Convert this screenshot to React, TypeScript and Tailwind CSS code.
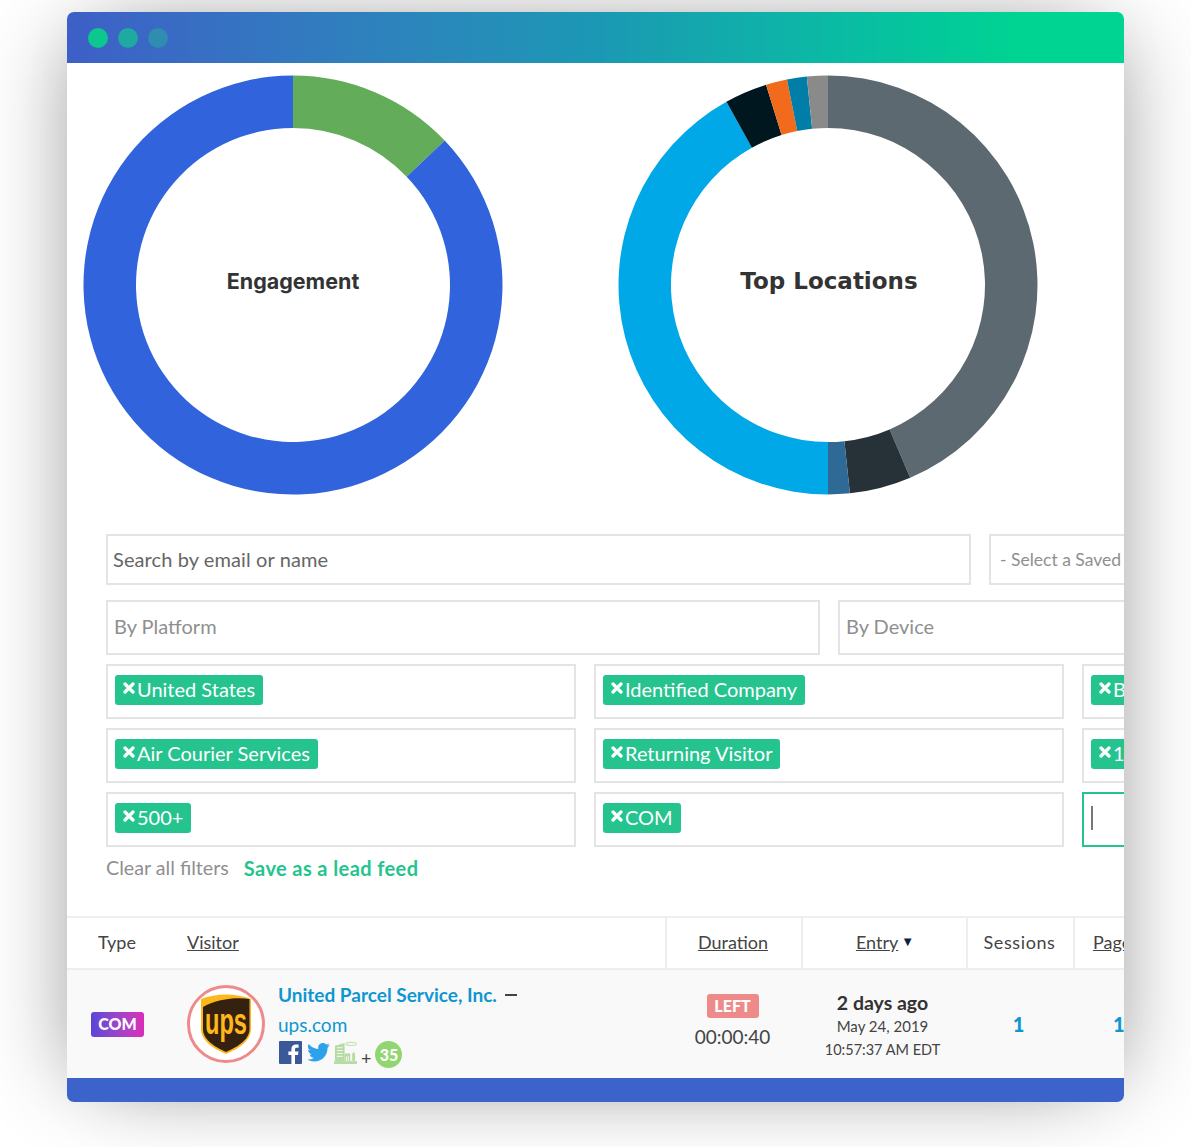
const SANS = "font-['Lato','Liberation_Sans',sans-serif]";

type Segment = { color: string; from: number; to: number };

const engagement: Segment[] = [
  { color: "#63ac59", from: 0, to: 46.4 },
  { color: "#3164dc", from: 46.4, to: 360 },
];

const locations: Segment[] = [
  { color: "#5c6970", from: 0, to: 156.9 },
  { color: "#263238", from: 156.9, to: 174 },
  { color: "#2f6a96", from: 174, to: 180 },
  { color: "#00a8e8", from: 180, to: 331 },
  { color: "#00171f", from: 331, to: 342.8 },
  { color: "#f26a1b", from: 342.8, to: 348.7 },
  { color: "#007ea7", from: 348.7, to: 354.2 },
  { color: "#8a8a8a", from: 354.2, to: 360 },
];

function arcPath(from: number, to: number) {
  const R = 209.5;
  const r = 157;
  const pt = (radius: number, deg: number) => {
    const a = (deg * Math.PI) / 180;
    return `${(210 + radius * Math.sin(a)).toFixed(2)} ${(210 - radius * Math.cos(a)).toFixed(2)}`;
  };
  const large = to - from > 180 ? 1 : 0;
  return `M${pt(R, from)} A${R} ${R} 0 ${large} 1 ${pt(R, to)} L${pt(r, to)} A${r} ${r} 0 ${large} 0 ${pt(r, from)} Z`;
}

function Donut({ segments, label, labelClass }: { segments: Segment[]; label: string; labelClass: string }) {
  return (
    <div className="relative h-[420px] w-[420px] shrink-0">
      <svg width="420" height="420" viewBox="0 0 420 420" className="block">
        {segments.map((s) => (
          <path key={s.color} d={arcPath(s.from, s.to)} fill={s.color} />
        ))}
      </svg>
      <div className={`absolute inset-0 flex items-center justify-center pb-2 font-bold text-[#333] ${labelClass}`}>
        {label}
      </div>
    </div>
  );
}

function Chip({ label }: { label: string }) {
  return (
    <span className="inline-flex h-[30px] shrink-0 items-center whitespace-nowrap rounded-[3px] bg-[#25c48e] pb-[2px] pl-2 pr-2 text-[20px] leading-none text-white">
      <svg width="12" height="12" viewBox="0 0 12 12" className="mr-[2px] -mt-[2px] shrink-0">
        <path d="M2 2 L10 10 M10 2 L2 10" stroke="#fff" strokeWidth="3.2" strokeLinecap="round" />
      </svg>
      {label}
    </span>
  );
}

function TagBox({ label, width, focused }: { label?: string; width: string; focused?: boolean }) {
  return (
    <div className={`flex h-[55px] shrink-0 items-center border-2 bg-white pb-[3px] pl-[7px] ${width} ${focused ? "border-[#25c48e]" : "border-[#e4e4e4]"}`}>
      {label && <Chip label={label} />}
      {focused && <span className="h-6 w-[2px] bg-[#777]" />}
    </div>
  );
}

function Window() {
  return (
    <div className={`ml-[67px] mt-3 h-[1090px] w-[1057px] overflow-hidden rounded-[7px] bg-white shadow-[-28px_0_80px_-25px_rgba(0,0,0,0.3),28px_0_80px_-25px_rgba(0,0,0,0.3)] ${SANS}`}>
      <div className="flex h-[51px] items-center gap-[10px] bg-linear-to-r from-[#3d5fc7] via-[#1b98b4] via-50% to-[#00d492] to-90% pl-[21px]">
        <span className="h-5 w-5 rounded-full bg-[#0cc88f]" />
        <span className="h-5 w-5 rounded-full bg-[#1eaaa0]" />
        <span className="h-5 w-5 rounded-full bg-[#2e8db0]" />
      </div>

      <div className="flex gap-[115px] pl-4 pt-3">
        <Donut segments={engagement} label="Engagement" labelClass="font-['Inter',sans-serif] text-[21.5px]" />
        <Donut segments={locations} label="Top Locations" labelClass="pl-[2px] font-['DejaVu_Sans',sans-serif] text-[23px]" />
      </div>

      <div className="mt-[39px] flex w-[1400px] gap-[18px] pl-[39px] text-[20px]">
        <div className="flex h-[51px] w-[865px] shrink-0 items-center border-2 border-[#e4e4e4] pb-[2px] pl-[5px] tracking-[0.1px] text-[#666]">
          Search by email or name
        </div>
        <div className="flex h-[51px] w-[300px] shrink-0 items-center border-2 border-[#e4e4e4] pl-[9px] pt-[2px] text-[17.5px] text-[#8f8f8f]">
          - Select a Saved Search
        </div>
      </div>

      <div className="mt-[15px] flex w-[1400px] gap-[18px] pl-[39px] text-[20px] text-[#8f8f8f]">
        <div className="flex h-[55px] w-[714px] shrink-0 items-center border-2 border-[#e4e4e4] pb-1 pl-[6px]">By Platform</div>
        <div className="flex h-[55px] w-[400px] shrink-0 items-center border-2 border-[#e4e4e4] pb-1 pl-[6px]">By Device</div>
      </div>

      <div className="mt-[9px] flex w-[1400px] flex-col gap-[9px] pl-[39px]">
        <div className="flex gap-[18px]">
          <TagBox label="United States" width="w-[470px]" />
          <TagBox label="Identified Company" width="w-[470px]" />
          <TagBox label="Business" width="w-[300px]" />
        </div>
        <div className="flex gap-[18px]">
          <TagBox label="Air Courier Services" width="w-[470px]" />
          <TagBox label="Returning Visitor" width="w-[470px]" />
          <TagBox label="10+" width="w-[300px]" />
        </div>
        <div className="flex gap-[18px]">
          <TagBox label="500+" width="w-[470px]" />
          <TagBox label="COM" width="w-[470px]" />
          <TagBox width="w-[300px]" focused />
        </div>
      </div>

      <div className="mt-[9px] flex h-6 items-center gap-[15px] pl-[39px]">
        <span className="text-[19.7px] text-[#8f8f8f]">Clear all filters</span>
        <span className="text-[20px] font-bold tracking-[0.4px] text-[#25c48e]">Save as a lead feed</span>
      </div>

      <Table />
    </div>
  );
}

function Table() {
  return (
    <div className="mt-[36px]">
      <div className="flex h-[54px] w-[1300px] items-center border-y-2 border-[#eee] text-[18px] text-[#444]">
        <div className="w-[120px] pb-[2px] pl-[31px]">Type</div>
        <div className="w-[478px] pb-[2px] underline">Visitor</div>
        <div className="flex h-full w-[136px] items-center justify-center border-l-2 border-[#eee] pb-[2px] pr-[2px] underline">Duration</div>
        <div className="flex h-full w-[165px] items-center justify-center gap-[3px] border-l-2 border-[#eee] pb-[2px] pl-px">
          <span className="underline">Entry</span>
          <span className="text-[13px] text-[#0b1f4b]">▼</span>
        </div>
        <div className="flex h-full w-[107px] items-center justify-center border-l-2 border-[#eee] pb-[2px] pr-[2px] tracking-[0.6px]">Sessions</div>
        <div className="flex h-full w-[120px] items-center border-l-2 border-[#eee] pb-[2px] pl-[18px] underline">Pages</div>
      </div>

      <div className="flex h-[108px] w-[1300px] items-center bg-[#f9f9f9] text-[#444]">
        <div className="flex w-[120px] pl-6">
          <span className="flex h-[25px] w-[53px] items-center justify-center rounded-[3px] bg-linear-to-r from-[#5a45d8] to-[#d92bb8] text-[16px] font-black text-white">COM</span>
        </div>
        <div className="flex w-[478px] items-center gap-[13px]">
          <UpsLogo />
          <div className="mt-1 flex flex-col">
            <div className="flex items-center gap-2 text-[19px] font-bold leading-[22px] text-[#0f96d0]">
              United Parcel Service, Inc.
              <span className="h-[2px] w-3 bg-[#444]" />
            </div>
            <div className="mt-2 text-[19px] leading-[22px] text-[#0f96d0]">ups.com</div>
            <div className="mt-[5px] flex items-start gap-[4px] pl-px">
              <FacebookIcon />
              <TwitterIcon />
              <BuildingIcon />
              <span className="mt-[8px] text-[18px] leading-none text-[#444]">+</span>
              <span className="flex h-[27px] w-[27px] items-center justify-center rounded-full bg-[#92d672] text-[16px] font-black text-white">35</span>
            </div>
          </div>
        </div>
        <div className="mb-[6px] flex w-[136px] flex-col items-center pr-px">
          <span className="flex h-6 w-[52px] items-center justify-center rounded-[3px] bg-[#ef8a8a] text-[16px] font-black text-white">LEFT</span>
          <span className="mt-[7px] text-[19px] leading-[24px]">00:00:40</span>
        </div>
        <div className="mt-[3px] flex w-[165px] flex-col items-center pr-[2px]">
          <span className="text-[19.5px] font-bold leading-[24px] text-[#333]">2 days ago</span>
          <span className="text-[15px] leading-[23px]">May 24, 2019</span>
          <span className="text-[14.5px] leading-[23px]">10:57:37 AM EDT</span>
        </div>
        <div className="w-[107px] pr-[2px] text-center text-[20px] font-black text-[#0f96d0]">1</div>
        <div className="pl-[40px] text-[20px] font-black text-[#0f96d0]">1</div>
      </div>

      <div className="h-6 bg-[#3b63c9]" />
    </div>
  );
}

function UpsLogo() {
  return (
    <div className="flex h-[78px] w-[78px] shrink-0 items-center justify-center rounded-full border-[3.5px] border-[#ef8a8a] bg-white">
      <svg width="52" height="62" viewBox="0 0 52 62">
        <path d="M1 6 C16 0 36 0 51 6 V36 C51 48 38 56 26 61 C14 56 1 48 1 36 Z" fill="#ffb81c" />
        <path d="M3 14 C17 6 36 4 49.5 6 V36 C49.5 47 37 54 26 59 C15 54 3 47 3 36 Z" fill="#35210f" />
        <text x="26" y="41" textAnchor="middle" fontFamily="'Liberation Sans', sans-serif" fontWeight="700" fontSize="36" textLength="42" lengthAdjust="spacingAndGlyphs" fill="#ffb81c">ups</text>
      </svg>
    </div>
  );
}

function FacebookIcon() {
  return (
    <svg width="23" height="23" viewBox="0 0 23 23">
      <rect width="23" height="23" rx="1" fill="#3b5998" />
      <path d="M16 23 V14 H19 L19.5 10.5 H16 V8.5 C16 7.4 16.4 6.8 17.8 6.8 H19.6 V3.6 C19 3.5 18 3.4 16.9 3.4 C14.2 3.4 12.4 5 12.4 8 V10.5 H9.4 V14 H12.4 V23 Z" fill="#fff" />
    </svg>
  );
}

function TwitterIcon() {
  return (
    <svg width="23" height="19" viewBox="0 0 24 20" className="ml-px mt-[2px]">
      <path d="M24 2.4a9.8 9.8 0 0 1-2.8.8A4.9 4.9 0 0 0 23.3.5a9.8 9.8 0 0 1-3.1 1.2 4.9 4.9 0 0 0-8.4 4.5A14 14 0 0 1 1.7 1a4.9 4.9 0 0 0 1.5 6.6 4.9 4.9 0 0 1-2.2-.6c0 2.4 1.7 4.4 3.9 4.9a4.9 4.9 0 0 1-2.2.1 4.9 4.9 0 0 0 4.6 3.4A9.9 9.9 0 0 1 0 17.4 14 14 0 0 0 7.5 19.6c9.1 0 14-7.5 14-14v-.6A10 10 0 0 0 24 2.4z" fill="#2da1ec" />
    </svg>
  );
}

function BuildingIcon() {
  return (
    <svg width="23" height="23" viewBox="0 0 24 24" fill="#b5dca4">
      <path d="M1 5 L11 2 V21 H1 Z" />
      <path d="M11 13 H17 V21 H11 Z" />
      <path d="M0 21 H24 V24 H0 Z" />
      <rect x="19" y="12" width="3" height="9" rx="1.5" />
      <ellipse cx="18" cy="3" rx="6" ry="1.6" fill="none" stroke="#b5dca4" />
      <path d="M3 7 H9 M3 10 H9 M3 13 H9 M3 16 H9" stroke="#f9f9f9" />
      <path d="M13 16 V21 M15 16 V21" stroke="#f9f9f9" />
    </svg>
  );
}

export default function App() {
  return (
    <div className="h-[1147px] w-[1191px] overflow-hidden bg-white pt-[0.02px]">
      <Window />
    </div>
  );
}
